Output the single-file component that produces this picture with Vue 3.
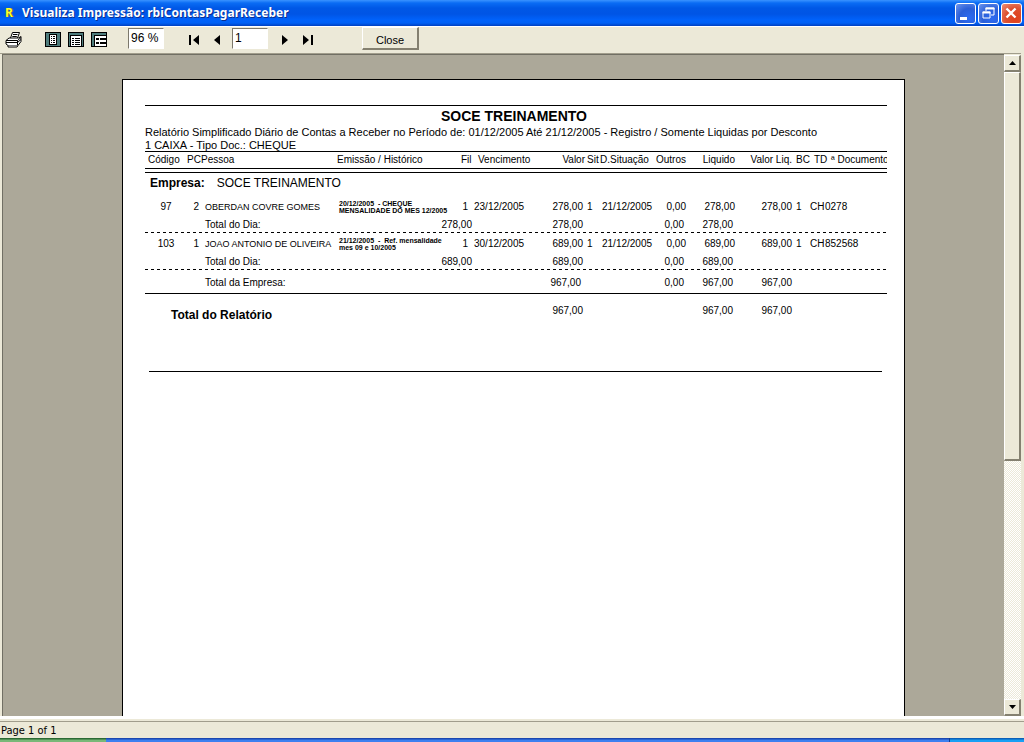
<script setup>
import { ref } from 'vue'

const zoom = ref('96 %')
const page = ref('1')

const days = [
  {
    code: '97', pc: '2', name: 'OBERDAN COVRE GOMES',
    history: ['20/12/2005  - CHEQUE', 'MENSALIDADE DO MES 12/2005'],
    branch: '1', due: '23/12/2005', value: '278,00', sit: '1', sitDate: '21/12/2005',
    others: '0,00', net: '278,00', netValue: '278,00', bc: '1', td: 'CH', doc: '0278',
  },
  {
    code: '103', pc: '1', name: 'JOAO ANTONIO DE OLIVEIRA',
    history: ['21/12/2005  -  Ref. mensalidade', 'mes 09 e 10/2005'],
    branch: '1', due: '30/12/2005', value: '689,00', sit: '1', sitDate: '21/12/2005',
    others: '0,00', net: '689,00', netValue: '689,00', bc: '1', td: 'CH', doc: '852568',
  },
]
</script>

<template>
  <div class="window">
    <header class="titlebar">
      <span class="app-icon">R</span>
      <h1>Visualiza Impressão: rbiContasPagarReceber</h1>
      <div class="controls">
        <button type="button" aria-label="Minimizar">
          <svg width="21" height="21" viewBox="0 0 21 21"><path d="M5 14h7v3H5z" fill="#fff" /></svg>
        </button>
        <button type="button" aria-label="Restaurar">
          <svg width="21" height="21" viewBox="0 0 21 21" fill="none" stroke="#fff">
            <path d="M8 8V5h8v7h-3" /><path d="M7.500 5.500h9" stroke-width="2" />
            <path d="M5 9h7v6H5z" /><path d="M4.500 9.500h8" stroke-width="2" />
          </svg>
        </button>
        <button type="button" class="close-x" aria-label="Fechar">
          <svg width="21" height="21" viewBox="0 0 21 21"><path d="M5.500 5.500l9 9m0-9l-9 9" stroke="#fff" stroke-width="2.400" /></svg>
        </button>
      </div>
    </header>

    <div class="toolbar">
      <button type="button" class="tool print" aria-label="Imprimir">
        <svg width="17" height="17" viewBox="0 0 17 17" fill="#fff" stroke="#000">
          <path d="M5.500 7L7.500 1.500h7L12.500 7" />
          <path d="M8 3.500h4.500M7.300 5.500h4.500" />
          <path d="M1 9.500L4 7h9.500l2.500-1.500v5l-3 4H3l-2-1.500z" />
          <path d="M1 9.500h11.500L16 6.500M12.500 9.500v5M1 11.500h11.500l3.500-3" fill="none" />
          <path d="M3 14.500v1.500h9l1-1.500" />
        </svg>
      </button>
      <button type="button" class="tool" aria-label="Página inteira">
        <svg width="16" height="15" viewBox="0 0 16 15" shape-rendering="crispEdges">
          <path d="M0 0h16v15H0z" /><path d="M1 1h14v13H1z" fill="#4e7c7c" />
          <path d="M4 2h8v11H4z" /><path d="M5 3h6v9H5z" fill="#fff" />
          <path d="M6 4h1v1H6zM8 4h2v1H8zM6 6h1v1H6zM8 6h2v1H8zM6 8h1v1H6zM8 8h2v1H8zM6 10h1v1H6zM8 10h2v1H8z" />
        </svg>
      </button>
      <button type="button" class="tool" aria-label="Largura da página">
        <svg width="16" height="15" viewBox="0 0 16 15" shape-rendering="crispEdges">
          <path d="M0 0h16v15H0z" /><path d="M1 1h14v13H1z" fill="#4e7c7c" />
          <path d="M2 3h12v12H2z" /><path d="M3 4h10v10H3z" fill="#fff" />
          <path d="M4 6h2v1H4zM7 6h5v1H7zM4 8h2v1H4zM7 8h5v1H7zM4 10h2v1H4zM7 10h5v1H7zM4 12h2v1H4zM7 12h5v1H7z" />
        </svg>
      </button>
      <button type="button" class="tool" aria-label="Zoom 100%">
        <svg width="16" height="15" viewBox="0 0 16 15" shape-rendering="crispEdges">
          <path d="M0 0h16v15H0z" /><path d="M1 1h14v13H1z" fill="#4e7c7c" />
          <path d="M3 3h13v12H3z" /><path d="M4 4h11v10H4z" fill="#fff" />
          <path d="M5 6h3v2H5zM9 6h6v2H9zM5 10h3v2H5zM9 10h6v2H9z" />
        </svg>
      </button>
      <input v-model="zoom" class="zoom" type="text" aria-label="Zoom">
      <button type="button" class="tool first" aria-label="Primeira página">
        <svg width="11" height="10" viewBox="0 0 11 10"><path d="M0 0h2v10H0zM10 0v10L4 5z" /></svg>
      </button>
      <button type="button" class="tool prev" aria-label="Página anterior">
        <svg width="6" height="10" viewBox="0 0 6 10"><path d="M6 0v10L0 5z" /></svg>
      </button>
      <input v-model="page" class="page-no" type="text" aria-label="Página">
      <button type="button" class="tool next" aria-label="Próxima página">
        <svg width="6" height="10" viewBox="0 0 6 10"><path d="M0 0v10l6-5z" /></svg>
      </button>
      <button type="button" class="tool last" aria-label="Última página">
        <svg width="11" height="10" viewBox="0 0 11 10"><path d="M1 0v10l6-5zM9 0h2v10H9z" /></svg>
      </button>
      <button type="button" class="close">Close</button>
    </div>

    <main class="viewport">
      <div class="canvas">
        <article class="sheet">
          <h2>SOCE TREINAMENTO</h2>
          <p class="desc">Relatório Simplificado Diário de Contas a Receber no Período de: 01/12/2005 Até 21/12/2005 - Registro / Somente Liquidas por Desconto</p>
          <p class="desc filter">1 CAIXA - Tipo Doc.: CHEQUE</p>
          <table>
            <colgroup>
              <col class="w-code"><col class="w-pc"><col><col class="w-hist"><col class="w-fil">
              <col class="w-due"><col class="w-value"><col class="w-sit"><col class="w-date">
              <col class="w-others"><col class="w-net"><col class="w-netval"><col class="w-bc">
              <col class="w-td"><col class="w-doc">
            </colgroup>
            <thead>
              <tr>
                <th class="h-code">Código</th><th>PC</th><th>Pessoa</th><th>Emissão / Histórico</th>
                <th class="h-fil">Fil</th><th class="h-due">Vencimento</th><th class="num">Valor</th>
                <th class="p2">Sit</th><th>D.Situação</th><th class="num">Outros</th>
                <th class="num">Liquido</th><th class="num">Valor Liq.</th><th class="p4">BC</th>
                <th class="p4">TD</th><th class="h-doc">ª Documento</th>
              </tr>
            </thead>
            <tbody>
              <tr class="company">
                <td colspan="15"><b>Empresa:</b><span>SOCE TREINAMENTO</span></td>
              </tr>
              <template v-for="d in days" :key="d.code">
                <tr class="entry">
                  <td class="mid">{{ d.code }}</td>
                  <td class="num r2">{{ d.pc }}</td>
                  <td class="p4 name">{{ d.name }}</td>
                  <td class="hist"><div v-for="line in d.history" :key="line">{{ line }}</div></td>
                  <td class="num r4">{{ d.branch }}</td>
                  <td class="p2">{{ d.due }}</td>
                  <td class="num r2">{{ d.value }}</td>
                  <td class="p2">{{ d.sit }}</td>
                  <td class="p2">{{ d.sitDate }}</td>
                  <td class="num">{{ d.others }}</td>
                  <td class="num">{{ d.net }}</td>
                  <td class="num">{{ d.netValue }}</td>
                  <td class="p4">{{ d.bc }}</td>
                  <td>{{ d.td }}</td>
                  <td>{{ d.doc }}</td>
                </tr>
                <tr class="day-total">
                  <td colspan="2"></td>
                  <td class="p4">Total do Dia:</td>
                  <td colspan="2" class="num">{{ d.value }}</td>
                  <td></td>
                  <td class="num r2">{{ d.value }}</td>
                  <td colspan="2"></td>
                  <td class="num r2">{{ d.others }}</td>
                  <td class="num r2">{{ d.net }}</td>
                  <td colspan="4"></td>
                </tr>
              </template>
            </tbody>
            <tfoot>
              <tr class="company-total">
                <td colspan="2"></td>
                <td class="p4" colspan="4">Total da Empresa:</td>
                <td class="num r4">967,00</td>
                <td colspan="2"></td>
                <td class="num r2">0,00</td>
                <td class="num r2">967,00</td>
                <td class="num">967,00</td>
                <td colspan="3"></td>
              </tr>
              <tr class="report-total">
                <td class="label" colspan="6">Total do Relatório</td>
                <td class="num r2">967,00</td>
                <td colspan="3"></td>
                <td class="num r2">967,00</td>
                <td class="num">967,00</td>
                <td colspan="3"></td>
              </tr>
            </tfoot>
          </table>
          <hr>
        </article>
      </div>
      <div class="scrollbar">
        <button type="button" aria-label="Rolar para cima">
          <svg width="7" height="4" viewBox="0 0 7 4"><path d="M0 4h7L3.500 0z" /></svg>
        </button>
        <div class="track"><div class="thumb"></div></div>
        <button type="button" aria-label="Rolar para baixo">
          <svg width="7" height="4" viewBox="0 0 7 4"><path d="M0 0h7L3.500 4z" /></svg>
        </button>
      </div>
    </main>

    <footer class="status">Page 1 of 1</footer>
    <div class="taskbar"><div class="start"></div><div class="tray"></div></div>
  </div>
</template>

<style>
body {
  margin: 0;
}
</style>

<style scoped>
.window {
  display: flex;
  flex-direction: column;
  height: 100vh;
  overflow: hidden;
  background: #ece9d8;
  color: #000;
  font-family: "Liberation Sans", Arial, sans-serif;
}
button {
  padding: 0;
  border: 0;
  background: none;
  color: inherit;
  font-family: inherit;
}
svg {
  display: block;
}
.titlebar {
  display: flex;
  align-items: center;
  flex: none;
  height: 26px;
  padding: 0 2px 0 4px;
  background: linear-gradient(#3a93ff 0, #0a6cf4 3px, #0058e6 8px, #0055e5 14px, #0062fb 20px, #0060f5 23px, #0040c0 26px);
}
.app-icon {
  width: 18px;
  color: #ffff30;
  font: bold 12px/24px "Noto Sans", sans-serif;
  text-indent: 1px;
  text-shadow: 1px 0 #665f00;
}
h1 {
  flex: 1;
  margin: 0;
  color: #fff;
  font: bold 12px/26px "Noto Sans", sans-serif;
  text-shadow: 1px 1px #0a2f90;
  white-space: nowrap;
}
.controls {
  display: flex;
  gap: 2px;
}
.controls button {
  box-sizing: border-box;
  width: 21px;
  height: 21px;
  border: 1px solid #fff;
  border-radius: 3px;
  background: radial-gradient(circle at 70% 75%, #2c6bf2, #2a5fd8 50%, #6f96ee);
}
.controls svg {
  margin: -1px;
}
.controls .close-x {
  background: radial-gradient(circle at 70% 75%, #e0401c, #dc5030 50%, #ec9078);
}
.toolbar {
  display: flex;
  align-items: flex-start;
  flex: none;
  height: 27px;
  padding: 0 5px;
  background: linear-gradient(#fff 0, #fff 1px, #ece9d8 1px);
}
.tool {
  margin: 6px 7px 0 0;
}
.print {
  margin: 5px 23px 0 0;
}
.first {
  margin: 9px 14px 0 25px;
}
.prev {
  margin: 9px 12px 0 0;
}
.next {
  margin: 9px 14px 0 14px;
}
.last {
  margin: 9px 49px 0 0;
}
input {
  box-sizing: border-box;
  width: 36px;
  height: 21px;
  padding: 0 2px 2px;
  border: 1px solid #fff;
  border-top-color: #7c786c;
  border-left-color: #7c786c;
  border-radius: 0;
  background: #fff;
  font: 12px/16px "Liberation Sans", Arial, sans-serif;
}
.zoom {
  margin: 2px 0 0 14px;
}
.page-no {
  margin-top: 2px;
}
.close {
  box-sizing: border-box;
  width: 57px;
  height: 23px;
  margin-top: 1px;
  padding-top: 3px;
  border: 1px solid #fff;
  border-right: 2px solid #848070;
  border-bottom: 2px solid #848070;
  font-size: 11px;
}
.viewport {
  display: flex;
  flex: 1;
  min-height: 0;
  margin-right: 3px;
  padding-left: 2px;
  border-top: 1px solid #a19d8c;
  background: #ece9d8;
}
.canvas {
  flex: 1;
  min-width: 0;
  overflow: hidden;
  border-top: 1px solid #716f64;
  border-left: 1px solid #716f64;
  background: #aca899;
}
.sheet {
  box-sizing: border-box;
  min-height: 100%;
  margin: 24px 99px 0 119px;
  padding: 25px 17px 0 22px;
  border: 1px solid #000;
  background: #fff;
}
h2 {
  margin: 0;
  padding-right: 4px;
  border-top: 1px solid #000;
  font-size: 14px;
  line-height: 20px;
  text-align: center;
}
.desc {
  margin: 0;
  font-size: 11px;
  line-height: 13px;
  white-space: nowrap;
}
.filter {
  height: 12px;
  overflow: hidden;
}
table {
  width: 100%;
  border-top: 1px solid #000;
  border-spacing: 0;
  table-layout: fixed;
  font-size: 10px;
  line-height: 14px;
  white-space: nowrap;
}
th,
td {
  padding: 0;
  font-weight: normal;
  text-align: left;
  vertical-align: top;
}
.w-code { width: 42px; }
.w-pc { width: 14px; }
.w-hist { width: 121px; }
.w-fil { width: 14px; }
.w-due { width: 48px; }
.w-value { width: 65px; }
.w-sit { width: 15px; }
.w-date { width: 52px; }
.w-others { width: 34px; }
.w-net { width: 49px; }
.w-netval { width: 57px; }
.w-bc { width: 18px; }
.w-td { width: 15px; }
.w-doc { width: 62px; }
.num { text-align: right; }
.mid { text-align: center; }
.p2 { padding-left: 2px; }
.p4 { padding-left: 4px; }
.r2 { padding-right: 2px; }
.r4 { padding-right: 4px; }
thead tr {
  background: linear-gradient(transparent 16px, #000 16px, #000 17px, transparent 17px, transparent 20px, #000 20px);
}
thead th {
  height: 20px;
  padding-top: 1px;
}
.h-code { padding-left: 3px; }
.h-fil { padding-left: 3px; }
.h-due { padding-left: 6px; }
.h-doc {
  padding-left: 6px;
  overflow: hidden;
}
.company td {
  height: 23px;
  padding-left: 5px;
  font-size: 12px;
  line-height: 20px;
}
.company span {
  margin-left: 12px;
}
.entry td {
  height: 14px;
  padding-top: 4px;
}
.entry .name {
  font-size: 9px;
}
.entry .hist {
  padding-left: 2px;
  font-size: 7px;
  font-weight: bold;
  line-height: 7px;
  white-space: pre;
}
.day-total {
  background: repeating-linear-gradient(90deg, #000 0, #000 3px, transparent 3px, transparent 6px) left bottom / 100% 1px no-repeat;
}
.day-total td {
  height: 14px;
  padding-top: 4px;
  padding-bottom: 1px;
}
.company-total td {
  height: 17px;
  padding-top: 6px;
  border-bottom: 1px solid #000;
}
.report-total td {
  padding-top: 10px;
}
.report-total .label {
  padding-top: 14px;
  padding-left: 26px;
  font-size: 12px;
  font-weight: bold;
}
hr {
  margin: 49px 5px 0 4px;
  border: 0;
  border-top: 1px solid #000;
}
.scrollbar {
  display: flex;
  flex-direction: column;
  flex: none;
  width: 17px;
  padding-top: 1px;
}
.scrollbar button,
.thumb {
  box-sizing: border-box;
  border: 1px solid #fff;
  border-right: 2px solid #848070;
  border-bottom: 2px solid #848070;
  background: #ece9d8;
}
.scrollbar button {
  display: grid;
  place-items: center;
  height: 17px;
}
.track {
  flex: 1;
  background: repeating-conic-gradient(#ece9d8 0 25%, #fff 0 50%) 0 0 / 2px 2px;
}
.thumb {
  height: 62%;
}
.status {
  flex: none;
  height: 17px;
  padding-left: 1px;
  border-top: 3px solid #fff;
  box-shadow: inset 0 2px #ece9d8, inset 0 3px #a19d8c;
  padding-top: 2px;
  font: 11px/20px "DejaVu Sans Condensed", Tahoma, sans-serif;
}
.taskbar {
  display: flex;
  justify-content: space-between;
  flex: none;
  height: 4px;
  background: linear-gradient(#1c48b0 0, #1c48b0 1px, #3c80f0 2px);
}
.start {
  width: 106px;
  background: linear-gradient(#2c6a34 0, #2c6a34 1px, #78b878 2px);
}
.tray {
  width: 74px;
  border-left: 1px solid #103c90;
  background: linear-gradient(#0c60b8 0, #0c60b8 1px, #18a0f4 2px);
}
</style>
